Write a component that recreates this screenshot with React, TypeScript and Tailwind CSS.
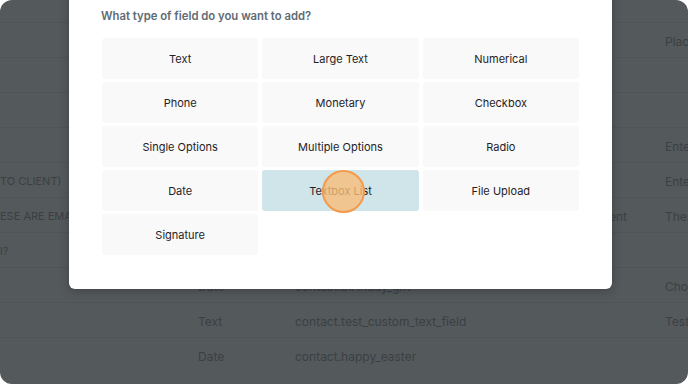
import React from "react";

const fieldTypes = [
  "Text",
  "Large Text",
  "Numerical",
  "Phone",
  "Monetary",
  "Checkbox",
  "Single Options",
  "Multiple Options",
  "Radio",
  "Date",
  "Textbox List",
  "File Upload",
  "Signature",
];

// rows of the table behind the overlay: [left, type, key, placeholder]
const rows: [string, string, string, string][] = [
  ["", "", "", "Place"],
  ["", "", "", ""],
  ["", "", "", ""],
  ["", "", "", "Ente"],
  ["TO CLIENT)", "", "", "Ente"],
  ["ESE ARE EMA", "", "ent", "Thes"],
  ["l?", "", "", ""],
  ["", "Date", "contact.birthday_gift", "Choo"],
  ["", "Text", "contact.test_custom_text_field", "Test"],
  ["", "Date", "contact.happy_easter", ""],
];

const App = () => {
  return (
    <div
      className="w-[688px] h-[384px] bg-white overflow-hidden"
      style={{ fontFamily: "Inter, 'Liberation Sans', sans-serif" }}
    >
      <div className="relative w-full h-full rounded-[12px] bg-[#54595c] overflow-hidden">
        {/* table behind overlay */}
        <div className="flex flex-col text-[12px] text-[#3c4043] pt-[22px]">
          {rows.map((r, i) => (
            <div
              key={i}
              className="h-[35px] shrink-0 flex items-center pt-[3px] border-t border-[#4f5457]"
            >
              <div className="w-[198px] shrink-0 whitespace-nowrap overflow-hidden text-[11px]">{r[0]}</div>
              <div className="w-[97px] shrink-0">{r[1]}</div>
              <div className="w-[370px] shrink-0 whitespace-nowrap flex justify-end pr-[38px]">
                {r[2] === "ent" ? "ent" : <span className="w-full">{r[2]}</span>}
              </div>
              <div className="whitespace-nowrap">{r[3]}</div>
            </div>
          ))}
        </div>

        {/* modal */}
        <div className="absolute left-[69px] top-[-20px] w-[543px] bg-white rounded-md shadow-[0_2px_10px_rgba(0,0,0,0.25)] pt-[28px] pl-[32px] pr-[33px] pb-[34px]">
          <p className="text-[11.3px] font-semibold text-[#5f6b74] leading-[16px]">
            What type of field do you want to add?
          </p>
          <div className="mt-[14px] grid grid-cols-3 gap-x-[4px] gap-y-[3px] ml-[1px]">
            {fieldTypes.map((t) => (
              <div
                key={t}
                className={
                  "h-[41px] rounded-[3px] flex items-center justify-center pt-[1px] text-[11px] text-[#1f2328] " +
                  (t === "Textbox List" ? "bg-[#cfe5ea]" : "bg-[#f9f9f9]")
                }
              >
                {t}
              </div>
            ))}
          </div>
        </div>

        {/* click marker */}
        <div className="absolute left-[322px] top-[170px] w-[43px] h-[43px] rounded-full bg-[#f8bd78]/80 border-2 border-[#f39a4d]" />
      </div>
    </div>
  );
};

export default App;
